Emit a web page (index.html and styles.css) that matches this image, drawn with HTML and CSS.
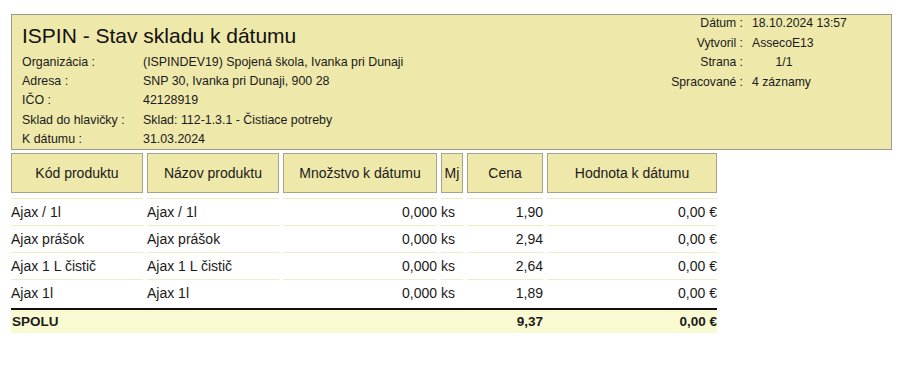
FILE: index.html
```html
<!DOCTYPE html>
<html lang="sk">
<head>
<meta charset="utf-8">
<title>ISPIN - Stav skladu k dátumu</title>
<link rel="stylesheet" href="styles.css">
</head>
<body>
<div class="report">
  <div class="head">
    <div class="head-left">
      <h1 class="title">ISPIN - Stav skladu k dátumu</h1>
      <div class="info">
        <span>Organizácia :</span><span>(ISPINDEV19) Spojená škola, Ivanka pri Dunaji</span>
        <span>Adresa :</span><span>SNP 30, Ivanka pri Dunaji, 900 28</span>
        <span>IČO :</span><span>42128919</span>
        <span>Sklad do hlavičky :</span><span>Sklad: 112-1.3.1 - Čistiace potreby</span>
        <span>K dátumu :</span><span>31.03.2024</span>
      </div>
    </div>
    <div class="meta">
      <span class="ml">Dátum :</span><span>18.10.2024 13:57</span>
      <span class="ml">Vytvoril :</span><span>AssecoE13</span>
      <span class="ml">Strana :</span><span class="center">1/1</span>
      <span class="ml">Spracované :</span><span>4 záznamy</span>
    </div>
  </div>

  <div class="table">
    <div class="row thead">
      <div class="th">Kód produktu</div>
      <div class="th">Názov produktu</div>
      <div class="th">Množstvo k dátumu</div>
      <div class="th">Mj</div>
      <div class="th">Cena</div>
      <div class="th">Hodnota k dátumu</div>
    </div>
    <div class="body">
      <div class="row tr">
        <div class="td">Ajax / 1l</div>
        <div class="td">Ajax / 1l</div>
        <div class="td num">0,000</div>
        <div class="td">ks</div>
        <div class="td num">1,90</div>
        <div class="td num">0,00 €</div>
      </div>
      <div class="row tr">
        <div class="td">Ajax prášok</div>
        <div class="td">Ajax prášok</div>
        <div class="td num">0,000</div>
        <div class="td">ks</div>
        <div class="td num">2,94</div>
        <div class="td num">0,00 €</div>
      </div>
      <div class="row tr">
        <div class="td">Ajax 1 L čistič</div>
        <div class="td">Ajax 1 L čistič</div>
        <div class="td num">0,000</div>
        <div class="td">ks</div>
        <div class="td num">2,64</div>
        <div class="td num">0,00 €</div>
      </div>
      <div class="row tr">
        <div class="td">Ajax 1l</div>
        <div class="td">Ajax 1l</div>
        <div class="td num">0,000</div>
        <div class="td">ks</div>
        <div class="td num">1,89</div>
        <div class="td num">0,00 €</div>
      </div>
    </div>
    <div class="row total">
      <div class="td">SPOLU</div>
      <div class="td"></div>
      <div class="td"></div>
      <div class="td"></div>
      <div class="td num">9,37</div>
      <div class="td num">0,00 €</div>
    </div>
  </div>
</div>
</body>
</html>
```

FILE: styles.css
```css
* { box-sizing: border-box; }
html, body { margin: 0; padding: 0; background: #fff; }
body {
  font-family: "Liberation Sans", Arial, sans-serif;
  color: #1a1a1a;
}
.report {
  padding: 14px 0 0 11px;
}
.head {
  width: 881px;
  height: 136px;
  background: #eee8aa;
  border: 1px solid #9a9a90;
  display: flex;
  justify-content: space-between;
  overflow: hidden;
}
.head-left {
  padding: 9px 0 0 10px;
}
.title {
  margin: 0;
  font-size: 21px;
  font-weight: normal;
  line-height: 24px;
  color: #111;
}
.info {
  margin-top: 5px;
  display: grid;
  grid-template-columns: 121px auto;
  font-size: 12.4px;
  line-height: 19.2px;
}
.meta {
  display: grid;
  grid-template-columns: 80px 130px;
  column-gap: 9px;
  align-content: start;
  font-size: 12.2px;
  line-height: 19.5px;
  padding: 0 9px 0 0;
  margin-top: -1px;
}
.ml { text-align: right; }
.center { display: block; width: 64px; text-align: center; }

.table {
  margin-top: 3px;
  width: 706px;
  font-size: 14px;
}
.row {
  display: grid;
  grid-template-columns: 132px 132px 154px 22px 76px 170px;
  column-gap: 4px;
}
.th {
  height: 40px;
  background: #eee8aa;
  border: 1px solid #a8a488;
  display: flex;
  align-items: center;
  justify-content: center;
  text-align: center;
  color: #1a1a1a;
  white-space: nowrap;
  overflow: hidden;
}
.body {
  margin-top: 5px;
  padding-bottom: 2px;
}
.tr .td {
  height: 27px;
  border-top: 1px solid #f0ecc4;
  line-height: 26px;
  white-space: nowrap;
}
.num { text-align: right; }
.total {
  border-top: 2px solid #111;
  background: #fafad2;
  font-weight: bold;
  height: 25px;
  line-height: 23px;
  font-size: 13.5px;
}
.total .td { white-space: nowrap; padding-left: 1px; }
.total .num { padding-left: 0; }
```
